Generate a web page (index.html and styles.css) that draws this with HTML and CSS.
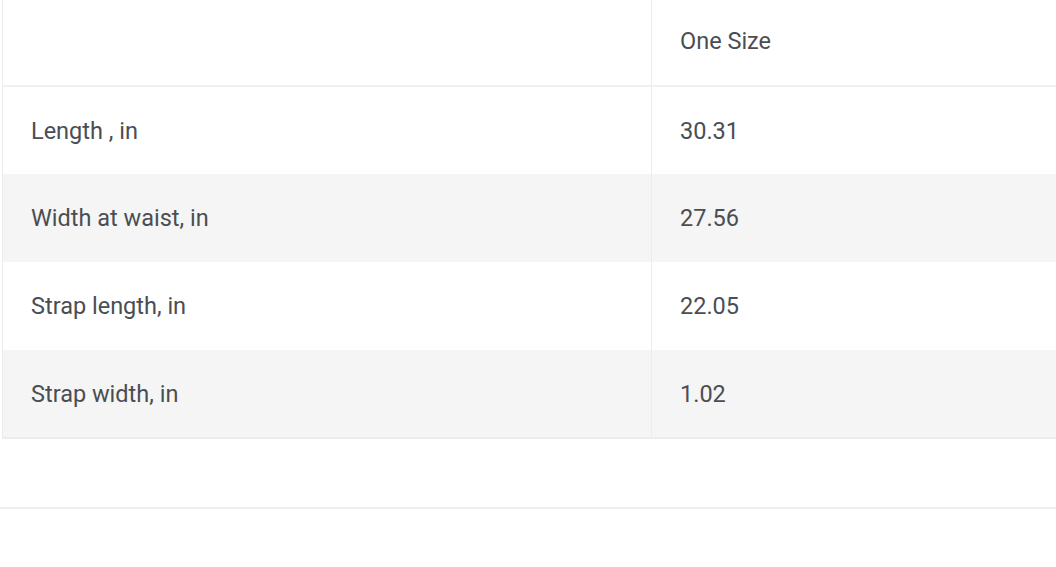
FILE: index.html
```html
<!DOCTYPE html>
<html>
<head>
<meta charset="utf-8">
<link rel="stylesheet" href="styles.css">
</head>
<body>
<div class="page">
  <table class="sizes">
    <tr class="head">
      <td class="label"></td>
      <td class="value">One Size</td>
    </tr>
    <tr>
      <td class="label">Length , in</td>
      <td class="value">30.31</td>
    </tr>
    <tr class="alt">
      <td class="label">Width at waist, in</td>
      <td class="value">27.56</td>
    </tr>
    <tr>
      <td class="label">Strap length, in</td>
      <td class="value">22.05</td>
    </tr>
    <tr class="alt">
      <td class="label">Strap width, in</td>
      <td class="value">1.02</td>
    </tr>
  </table>
  <div class="divider"></div>
</div>
</body>
</html>
```
FILE: styles.css
```css
html, body {
  margin: 0;
  padding: 0;
  background: #fff;
}
.page {
  width: 1056px;
  height: 567px;
  overflow: hidden;
  font-family: Roboto, "Liberation Sans", sans-serif;
  color: #4a4e53;
}
.sizes {
  margin-left: 2px;
  width: 1060px;
  border-collapse: collapse;
  border-left: 1px solid #ececec;
  border-bottom: 2px solid #ececec;
}
.sizes td {
  height: 88px;
  padding: 0;
  font-size: 23.5px;
  vertical-align: middle;
  box-sizing: border-box;
}
.sizes .head td {
  height: 86px;
  padding-bottom: 3px;
  border-bottom: 2px solid #f0f0f0;
}
.sizes .label {
  width: 649px;
  padding-left: 28px;
  border-right: 1px solid #ececec;
}
.sizes .value {
  padding-left: 28px;
}
.sizes .alt td {
  background: #f5f5f5;
}
.divider {
  margin-top: 68px;
  height: 2px;
  background: #eeeeee;
}
```
